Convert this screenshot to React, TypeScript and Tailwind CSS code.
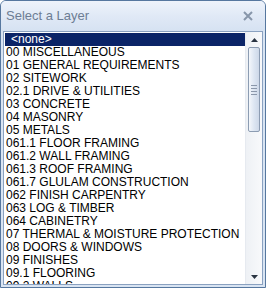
import React from "react";

const layers = [
  "00 MISCELLANEOUS",
  "01 GENERAL REQUIREMENTS",
  "02 SITEWORK",
  "02.1 DRIVE & UTILITIES",
  "03 CONCRETE",
  "04 MASONRY",
  "05 METALS",
  "061.1 FLOOR FRAMING",
  "061.2 WALL FRAMING",
  "061.3 ROOF FRAMING",
  "061.7 GLULAM CONSTRUCTION",
  "062 FINISH CARPENTRY",
  "063 LOG & TIMBER",
  "064 CABINETRY",
  "07 THERMAL & MOISTURE PROTECTION",
  "08 DOORS & WINDOWS",
  "09 FINISHES",
  "09.1 FLOORING",
  "09.2 WALLS",
];

function ScrollBar() {
  return (
    <div className="flex w-[17px] flex-col border-l border-[#e6eaf0] bg-gradient-to-r from-[#eef1f5] to-[#f8f9fb]">
      <div className="flex h-[15px] items-center justify-center">
        <svg width="7" height="4" viewBox="0 0 7 4">
          <path d="M0 4 L3.5 0 L7 4 Z" fill="#2a3442" />
        </svg>
      </div>
      <div className="flex-1">
        <div className="mx-auto flex h-[85px] w-[12px] flex-col items-center justify-center gap-[2px] rounded-[2px] border border-[#8c9cb2] bg-gradient-to-r from-[#f4f7fb] via-[#dde6f2] to-[#cdd8e8]">
          <div className="h-px w-[6px] bg-[#8a97aa]" />
          <div className="h-px w-[6px] bg-[#8a97aa]" />
          <div className="h-px w-[6px] bg-[#8a97aa]" />
          <div className="h-px w-[6px] bg-[#8a97aa]" />
        </div>
      </div>
      <div className="flex h-[15px] items-center justify-center">
        <svg width="7" height="4" viewBox="0 0 7 4">
          <path d="M0 0 L3.5 4 L7 0 Z" fill="#2a3442" />
        </svg>
      </div>
    </div>
  );
}

export default function App() {
  return (
    <div
      className="flex h-[288px] w-[266px] flex-col overflow-hidden rounded-t-[6px] border border-[#56779f] bg-[#d9e4f2]"
      style={{ fontFamily: '"Liberation Sans", Arial, sans-serif' }}
    >
      <div className="flex h-[30px] shrink-0 items-center justify-between bg-gradient-to-b from-[#eef3fb] via-[#e0e9f6] to-[#d6e2f2] pl-[5px] pr-[12px]">
        <span className="text-[13px] text-[#6d7d94]">Select a Layer</span>
        <svg width="10" height="10" viewBox="0 0 10 10">
          <path d="M1 1 L9 9 M9 1 L1 9" stroke="#8796aa" strokeWidth="2" />
        </svg>
      </div>
      <div className="mx-[2px] mb-[2px] flex min-h-0 flex-1 overflow-hidden border border-[#8aa1c0] bg-white">
        <div className="min-w-0 flex-1 overflow-hidden pl-px pt-px">
          <div className="flex h-[13px] items-center bg-[#0b2467] pl-[6px] text-[12px] leading-[13px] text-white">
            &lt;none&gt;
          </div>
          {layers.map((l) => (
            <div
              key={l}
              className="flex h-[13px] items-center whitespace-nowrap pl-px text-[12px] leading-[13px] text-black"
            >
              {l}
            </div>
          ))}
        </div>
        <ScrollBar />
      </div>
    </div>
  );
}
